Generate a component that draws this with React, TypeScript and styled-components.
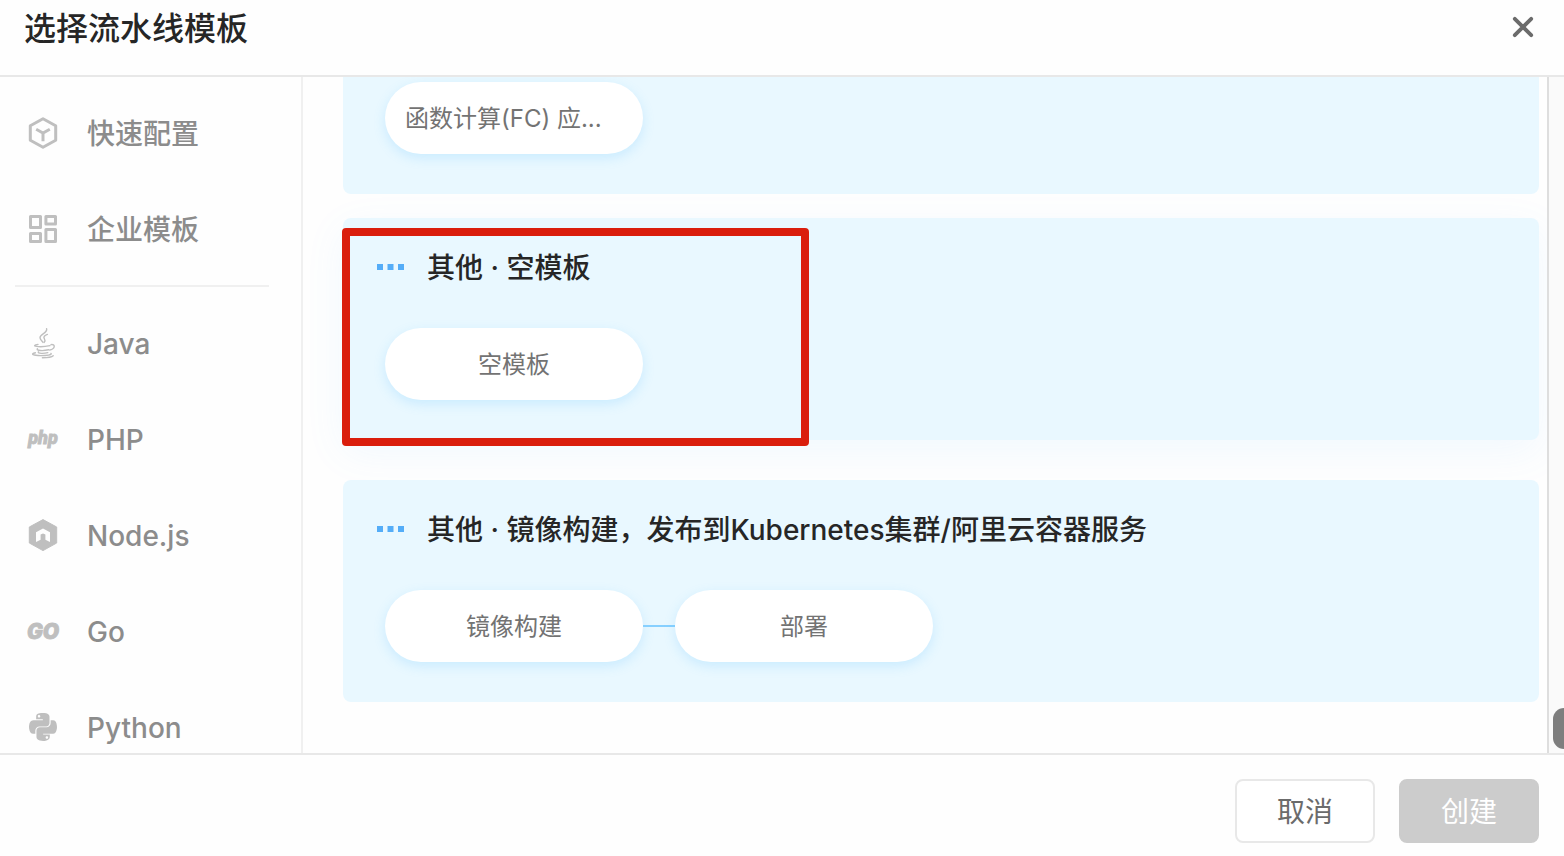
import React from 'react';
import styled, { createGlobalStyle } from 'styled-components';
import { FaPython } from 'react-icons/fa';

const GlobalStyle = createGlobalStyle`
  *, *::before, *::after { box-sizing: border-box; }
  body { margin: 0; background: #fefefe; }
  body, button {
    font-family: Inter, "Noto Sans CJK SC", sans-serif;
  }
  h1, h2, ol { margin: 0; padding: 0; }
`;

const Dialog = styled.div`
  display: flex;
  flex-direction: column;
  height: 100vh;
  overflow: hidden;
`;

const Header = styled.header`
  display: flex;
  flex: none;
  align-items: flex-start;
  justify-content: space-between;
  height: 77px;
  padding: 10px 24px 0;
  border-bottom: 2px solid #e8e8e8;
`;

const DialogTitle = styled.h1`
  font-size: 32px;
  line-height: 38px;
  font-weight: 500;
  color: #262626;
`;

const CloseButton = styled.button`
  display: flex;
  align-items: center;
  justify-content: center;
  width: 34px;
  height: 34px;
  padding: 0;
  border: 0;
  background: none;
  color: #6b6b6b;
`;

const Body = styled.div`
  display: flex;
  flex: 1;
  min-height: 0;
`;

const Sidebar = styled.nav`
  flex: none;
  width: 303px;
  padding-top: 8px;
  border-right: 2px solid #f0f0f0;
  overflow: hidden;
`;

const NavItem = styled.button`
  display: flex;
  align-items: center;
  gap: 28px;
  width: 100%;
  height: 96px;
  padding: 0 27px;
  border: 0;
  background: none;
  color: #8c8c8c;
  text-align: left;

  svg {
    flex: none;
    color: #bfbfbf;
  }
`;

const NavLabel = styled.span`
  padding-top: 2px;
  font-size: 28px;
  line-height: 40px;
  font-weight: 500;
`;

const NavDivider = styled.hr`
  height: 2px;
  margin: 8px 32px 8px 15px;
  border: 0;
  background: #f0f0f0;
`;

const Main = styled.main`
  display: flex;
  flex: 1;
  flex-direction: column;
  justify-content: flex-end;
  gap: 24px;
  min-width: 0;
  padding: 0 8px 51px 40px;
  overflow: hidden;
`;

const Card = styled.section<{ $raised?: boolean }>`
  position: relative;
  display: flex;
  flex: none;
  flex-direction: column;
  justify-content: flex-end;
  gap: 40px;
  height: 222px;
  margin-bottom: ${(p) => (p.$raised ? '16px' : '0')};
  padding: 28px 32px 40px;
  border-radius: 8px;
  background: #e9f8ff;
  box-shadow: ${(p) => (p.$raised ? '0 12px 40px rgba(90, 180, 250, 0.08)' : 'none')};
`;

const CardHeading = styled.div`
  display: flex;
  align-items: center;
  gap: 22px;
  height: 42px;
`;

const CardTitle = styled.h2`
  padding-top: 2px;
  font-size: 28px;
  line-height: 40px;
  font-weight: 500;
  color: #262626;
  white-space: nowrap;
`;

const Stages = styled.ol`
  display: flex;
  padding-left: 10px;
  list-style: none;
`;

const Stage = styled.li`
  display: flex;
  align-items: center;

  & + &::before {
    content: '';
    width: 32px;
    height: 2px;
    background: #87d0ff;
  }
`;

const StageName = styled.span<{ $start?: boolean }>`
  width: 258px;
  height: 72px;
  padding: 0 20px;
  border-radius: 36px;
  background: #fff;
  box-shadow: 0 4px 12px rgba(90, 190, 255, 0.22);
  color: #737373;
  font-size: 24px;
  line-height: 74px;
  text-align: ${(p) => (p.$start ? 'left' : 'center')};
  white-space: nowrap;
`;

const Highlight = styled.div`
  position: absolute;
  top: 10px;
  left: -1px;
  width: 467px;
  height: 218px;
  border: 8px solid #da1e0d;
  border-radius: 4px;
  pointer-events: none;
`;

const ScrollTrack = styled.div`
  display: flex;
  flex: none;
  align-items: flex-end;
  width: 17px;
  padding: 0 0 4px 4px;
  border-left: 2px solid #dedede;
  background: #fafafa;
  overflow: hidden;
`;

const ScrollThumb = styled.div`
  flex: none;
  width: 22px;
  height: 41px;
  border-radius: 11px;
  background: #7e7e7e;
`;

const Footer = styled.footer`
  display: flex;
  flex: none;
  justify-content: flex-end;
  gap: 24px;
  height: 103px;
  padding: 24px 25px 0;
  border-top: 2px solid #e8e8e8;
`;

const FooterButton = styled.button<{ $primary?: boolean }>`
  width: 140px;
  height: 64px;
  padding: 2px 0 0;
  border: 2px solid ${(p) => (p.$primary ? '#cccccc' : '#e8e8e8')};
  border-radius: 8px;
  background: ${(p) => (p.$primary ? '#cccccc' : '#fff')};
  color: ${(p) => (p.$primary ? '#fff' : '#6b6b6b')};
  font-size: 28px;
  line-height: 40px;
`;

const CloseIcon = () => (
  <svg width="34" height="34" viewBox="0 0 34 34" fill="none" stroke="currentColor" strokeWidth="3.8" strokeLinecap="round" aria-hidden="true">
    <path d="M8.8 8.8 25.2 25.2M25.2 8.8 8.8 25.2" />
  </svg>
);

const CubeIcon = () => (
  <svg width="32" height="32" viewBox="0 0 32 32" fill="none" stroke="currentColor" strokeWidth="3" aria-hidden="true">
    <path d="M16 1.8 28.7 8.7V23.3L16 30.2 3.3 23.3V8.7Z" strokeLinejoin="round" />
    <path d="M9.2 12.3 16 16.1 22.8 12.3M16 16V24.2" />
  </svg>
);

const GridIcon = () => (
  <svg width="32" height="32" viewBox="0 0 32 32" fill="none" stroke="currentColor" strokeWidth="3" strokeLinejoin="round" aria-hidden="true">
    <rect x="3.5" y="3.5" width="10" height="11" />
    <rect x="18.9" y="3.5" width="9.6" height="7.4" />
    <rect x="3.5" y="20.6" width="10" height="7.9" />
    <rect x="18.9" y="16.6" width="9.6" height="11.9" />
  </svg>
);

const JavaIcon = () => (
  <svg width="32" height="32" viewBox="0 0 32 32" fill="none" stroke="currentColor" strokeWidth="1.4" strokeLinecap="round" aria-hidden="true">
    <path d="M19.6 1.6C21 6 12.6 7.4 13 10.8 13.2 13 15.2 14 16 15.4" />
    <path d="M20.4 7.4C17.6 8.4 16 10 17.4 11.8 18.4 13.2 18 14.4 17.2 15.4" />
    <path d="M11 17.4C7.4 18 6.4 19 9.4 19.4 13.6 20 18.4 19.6 23 18.6" />
    <path d="M24 17.6C28.4 16.8 28.6 21.6 22.8 23" />
    <path d="M10.4 21.8C9 23.6 15.6 24.2 21.6 22.8" />
    <path d="M11.4 24.8C10.4 26.6 16.6 26.8 20.8 25.6" />
    <path d="M8.4 25.8C2.6 27.2 6.6 28.6 13.6 28.6 19.6 28.6 25.4 28 24 26.4" />
    <path d="M15.4 30.8C20 30.8 24.6 30.4 26.2 28.8" />
  </svg>
);

const NodeIcon = () => (
  <svg width="32" height="32" viewBox="0 0 32 32" aria-hidden="true">
    <path d="M16 .6 29.7 8V24L16 31.6 2.3 24V8Z" fill="currentColor" stroke="currentColor" strokeLinejoin="round" />
    <path d="M9 23V13.2L16 9.5 23 13.2V23L18.4 20.8V15.6L16 14.4 13.6 15.6V20.8Z" fill="#fefefe" />
  </svg>
);

const WordmarkIcon = ({ word, family, size, y }: { word: string; family: string; size: number; y: number }) => (
  <svg width="32" height="32" viewBox="0 0 32 32" overflow="visible" aria-hidden="true">
    <text
      x="16"
      y={y}
      textAnchor="middle"
      fontFamily={`${family}, sans-serif`}
      fontSize={size}
      fontWeight="900"
      fontStyle="italic"
      fill="currentColor"
      stroke="currentColor"
      strokeWidth="0.8"
    >
      {word}
    </text>
  </svg>
);

const DotsIcon = () => (
  <svg width="30" height="8" viewBox="0 0 30 8" fill="#54adf8" aria-hidden="true">
    <rect x="2" y="1" width="6" height="6" />
    <rect x="12.5" y="1" width="6" height="6" />
    <rect x="23" y="1" width="6" height="6" />
  </svg>
);

const shortcuts = [
  { label: '快速配置', icon: <CubeIcon /> },
  { label: '企业模板', icon: <GridIcon /> },
];

const languages = [
  { label: 'Java', icon: <JavaIcon /> },
  { label: 'PHP', icon: <WordmarkIcon word="php" family="Roboto" size={18} y={21} /> },
  { label: 'Node.js', icon: <NodeIcon /> },
  { label: 'Go', icon: <WordmarkIcon word="GO" family="Inter" size={21} y={24} /> },
  { label: 'Python', icon: <FaPython size={32} /> },
];

const templates = [
  { stages: ['函数计算(FC) 应...'], truncated: true },
  { title: '其他 · 空模板', stages: ['空模板'], active: true },
  {
    title: '其他 · 镜像构建，发布到Kubernetes集群/阿里云容器服务',
    stages: ['镜像构建', '部署'],
  },
];

export default function App() {
  return (
    <>
      <GlobalStyle />
      <Dialog role="dialog">
        <Header>
          <DialogTitle>选择流水线模板</DialogTitle>
          <CloseButton type="button">
            <CloseIcon />
          </CloseButton>
        </Header>
        <Body>
          <Sidebar>
            {shortcuts.map((item) => (
              <NavItem type="button" key={item.label}>
                {item.icon}
                <NavLabel>{item.label}</NavLabel>
              </NavItem>
            ))}
            <NavDivider />
            {languages.map((item) => (
              <NavItem type="button" key={item.label}>
                {item.icon}
                <NavLabel>{item.label}</NavLabel>
              </NavItem>
            ))}
          </Sidebar>
          <Main>
            {templates.map((template) => (
              <Card key={template.stages[0]} $raised={template.active}>
                {template.title && (
                  <CardHeading>
                    <DotsIcon />
                    <CardTitle>{template.title}</CardTitle>
                  </CardHeading>
                )}
                <Stages>
                  {template.stages.map((stage) => (
                    <Stage key={stage}>
                      <StageName $start={template.truncated}>{stage}</StageName>
                    </Stage>
                  ))}
                </Stages>
                {template.active && <Highlight />}
              </Card>
            ))}
          </Main>
          <ScrollTrack>
            <ScrollThumb />
          </ScrollTrack>
        </Body>
        <Footer>
          <FooterButton type="button">取消</FooterButton>
          <FooterButton type="button" $primary>
            创建
          </FooterButton>
        </Footer>
      </Dialog>
    </>
  );
}
